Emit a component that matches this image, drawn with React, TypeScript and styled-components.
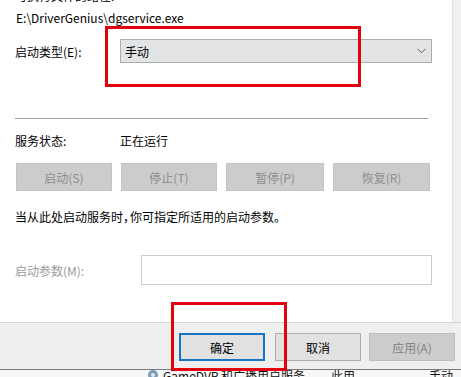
import React from "react";
import styled, { createGlobalStyle } from "styled-components";

const Global = createGlobalStyle`
  html, body { margin: 0; padding: 0; background: #ffffff; }
  body { font-family: "Noto Sans CJK SC", "Noto Sans", sans-serif; font-size: 12px; color: #000; }
`;

const Screen = styled.div`
  position: relative;
  width: 461px;
  height: 377px;
  overflow: hidden;
  display: flex;
  flex-direction: column;
  background: #f3f3f3;
`;

const Body = styled.div`
  height: 322px;
  display: flex;
  flex-shrink: 0;
`;

const Content = styled.div`
  flex: 1;
  background: #ffffff;
  padding-left: 15px;
  padding-right: 20px;
  display: flex;
  flex-direction: column;
`;

const Strip = styled.div`
  width: 8px;
  background: #f0f0f0;
  border-left: 1px solid #e2e2e2;
`;

const Text = styled.div<{ $muted?: boolean }>`
  font-size: 12px;
  line-height: 17px;
  color: ${(p) => (p.$muted ? "#9a9a9a" : "#000")};
  white-space: nowrap;
`;

const ClippedTitle = styled(Text)`
  margin-top: -13px;
  height: 17px;
`;

const PathText = styled(Text)`
  margin-top: 5px;
  padding-left: 1px;
`;

const Row = styled.div<{ $top: number; $labelW: number }>`
  display: grid;
  grid-template-columns: ${(p) => p.$labelW}px 1fr;
  align-items: center;
  margin-top: ${(p) => p.$top}px;
`;

const Combo = styled.div`
  height: 22px;
  background: #e3e4e6;
  border: 1px solid #adadad;
  display: flex;
  align-items: center;
  justify-content: space-between;
  padding: 0 5px 0 4px;
`;

const Separator = styled.div`
  height: 1px;
  background: #a0a0a0;
  margin-top: 55px;
  margin-right: 4px;
`;

const ButtonRow = styled.div`
  display: flex;
  gap: 9px;
  margin-top: 14px;
  padding-left: 1px;
`;

const DisabledButton = styled.div<{ $w: number }>`
  width: ${(p) => p.$w}px;
  height: 28px;
  background: #cccccc;
  border: 1px solid #c4c4c4;
  box-sizing: border-box;
  display: flex;
  align-items: center;
  justify-content: center;
  color: #8e8e8e;
  font-size: 12px;
`;

const Hint = styled(Text)`
  margin-top: 17px;
`;

const Punct = styled.span`
  letter-spacing: -5px;
`;

const Input = styled.div`
  height: 30px;
  box-sizing: border-box;
  border: 1px solid #cccccc;
  background: #fff;
`;

const Footer = styled.div`
  height: 48px;
  flex-shrink: 0;
  box-sizing: border-box;
  background: #efefef;
  border-top: 1px solid #d4d4d4;
  border-bottom: 1px solid #7a7a7a;
  display: flex;
  align-items: flex-start;
  justify-content: flex-end;
  padding: 10px 6px 0 0;
  gap: 8px;
`;

const FooterButton = styled.div<{ $variant: "primary" | "normal" | "disabled" }>`
  width: 86px;
  height: 28px;
  box-sizing: border-box;
  display: flex;
  align-items: center;
  justify-content: center;
  font-size: 12px;
  background: ${(p) => (p.$variant === "disabled" ? "#cccccc" : "#e1e1e1")};
  color: ${(p) => (p.$variant === "disabled" ? "#838383" : "#000")};
  border: ${(p) =>
    p.$variant === "primary"
      ? "2px solid #1a73c6"
      : p.$variant === "disabled"
      ? "1px solid #bfbfbf"
      : "1px solid #adadad"};
  margin-right: ${(p) => (p.$variant === "primary" ? "2px" : "0")};
`;

const ListRow = styled.div`
  flex: 1;
  background: #f7f7f7;
  position: relative;
  overflow: hidden;
  display: flex;
  align-items: flex-end;
`;

const ListInner = styled.div`
  display: flex;
  align-items: center;
  height: 16px;
  margin-bottom: -6px;
  padding-left: 146px;
  gap: 3px;
  font-size: 12px;
  color: #111;
  white-space: nowrap;
`;

const ListCell = styled.span<{ $w: number }>`
  display: inline-block;
  width: ${(p) => p.$w}px;
`;

const Highlight = styled.div<{ $x: number; $y: number; $w: number; $h: number }>`
  position: absolute;
  left: ${(p) => p.$x}px;
  top: ${(p) => p.$y}px;
  width: ${(p) => p.$w}px;
  height: ${(p) => p.$h}px;
  box-sizing: border-box;
  border: 3px solid #e3000f;
  pointer-events: none;
`;

const Chevron = () => (
  <svg width="9" height="6" viewBox="0 0 9 6">
    <path d="M0.5 0.8 L4.5 4.8 L8.5 0.8" fill="none" stroke="#555" strokeWidth="1" />
  </svg>
);

const Gear = () => (
  <svg width="14" height="14" viewBox="0 0 14 14">
    <circle cx="7" cy="7" r="5" fill="#7a9ab8" />
    <circle cx="7" cy="7" r="2" fill="#dfe8f0" />
  </svg>
);

export default function App() {
  return (
    <>
      <Global />
      <Screen>
        <Body>
          <Content>
            <ClippedTitle>可执行文件的路径:</ClippedTitle>
            <PathText>E:\DriverGenius\dgservice.exe</PathText>
            <Row $top={13} $labelW={105}>
              <Text>启动类型(E):</Text>
              <Combo>
                <Text>手动</Text>
                <Chevron />
              </Combo>
            </Row>
            <Separator />
            <Row $top={13} $labelW={105}>
              <Text>服务状态:</Text>
              <Text>正在运行</Text>
            </Row>
            <ButtonRow>
              <DisabledButton $w={96}>启动(S)</DisabledButton>
              <DisabledButton $w={96}>停止(T)</DisabledButton>
              <DisabledButton $w={98}>暂停(P)</DisabledButton>
              <DisabledButton $w={97}>恢复(R)</DisabledButton>
            </ButtonRow>
            <Hint>
              当从此处启动服务时<Punct>，</Punct>你可指定所适用的启动参数<Punct>。</Punct>
            </Hint>
            <Row $top={30} $labelW={126}>
              <Text $muted>启动参数(M):</Text>
              <Input />
            </Row>
          </Content>
          <Strip />
        </Body>
        <Footer>
          <FooterButton $variant="primary">确定</FooterButton>
          <FooterButton $variant="normal">取消</FooterButton>
          <FooterButton $variant="disabled">应用(A)</FooterButton>
        </Footer>
        <ListRow>
          <ListInner>
            <Gear />
            <ListCell $w={165}>GameDVR 和广播用户服务...</ListCell>
            <ListCell $w={95}>此用...</ListCell>
            <span>手动</span>
          </ListInner>
        </ListRow>
        <Highlight $x={105} $y={26} $w={256} $h={61} />
        <Highlight $x={171} $y={302} $w={116} $h={69} />
      </Screen>
    </>
  );
}
